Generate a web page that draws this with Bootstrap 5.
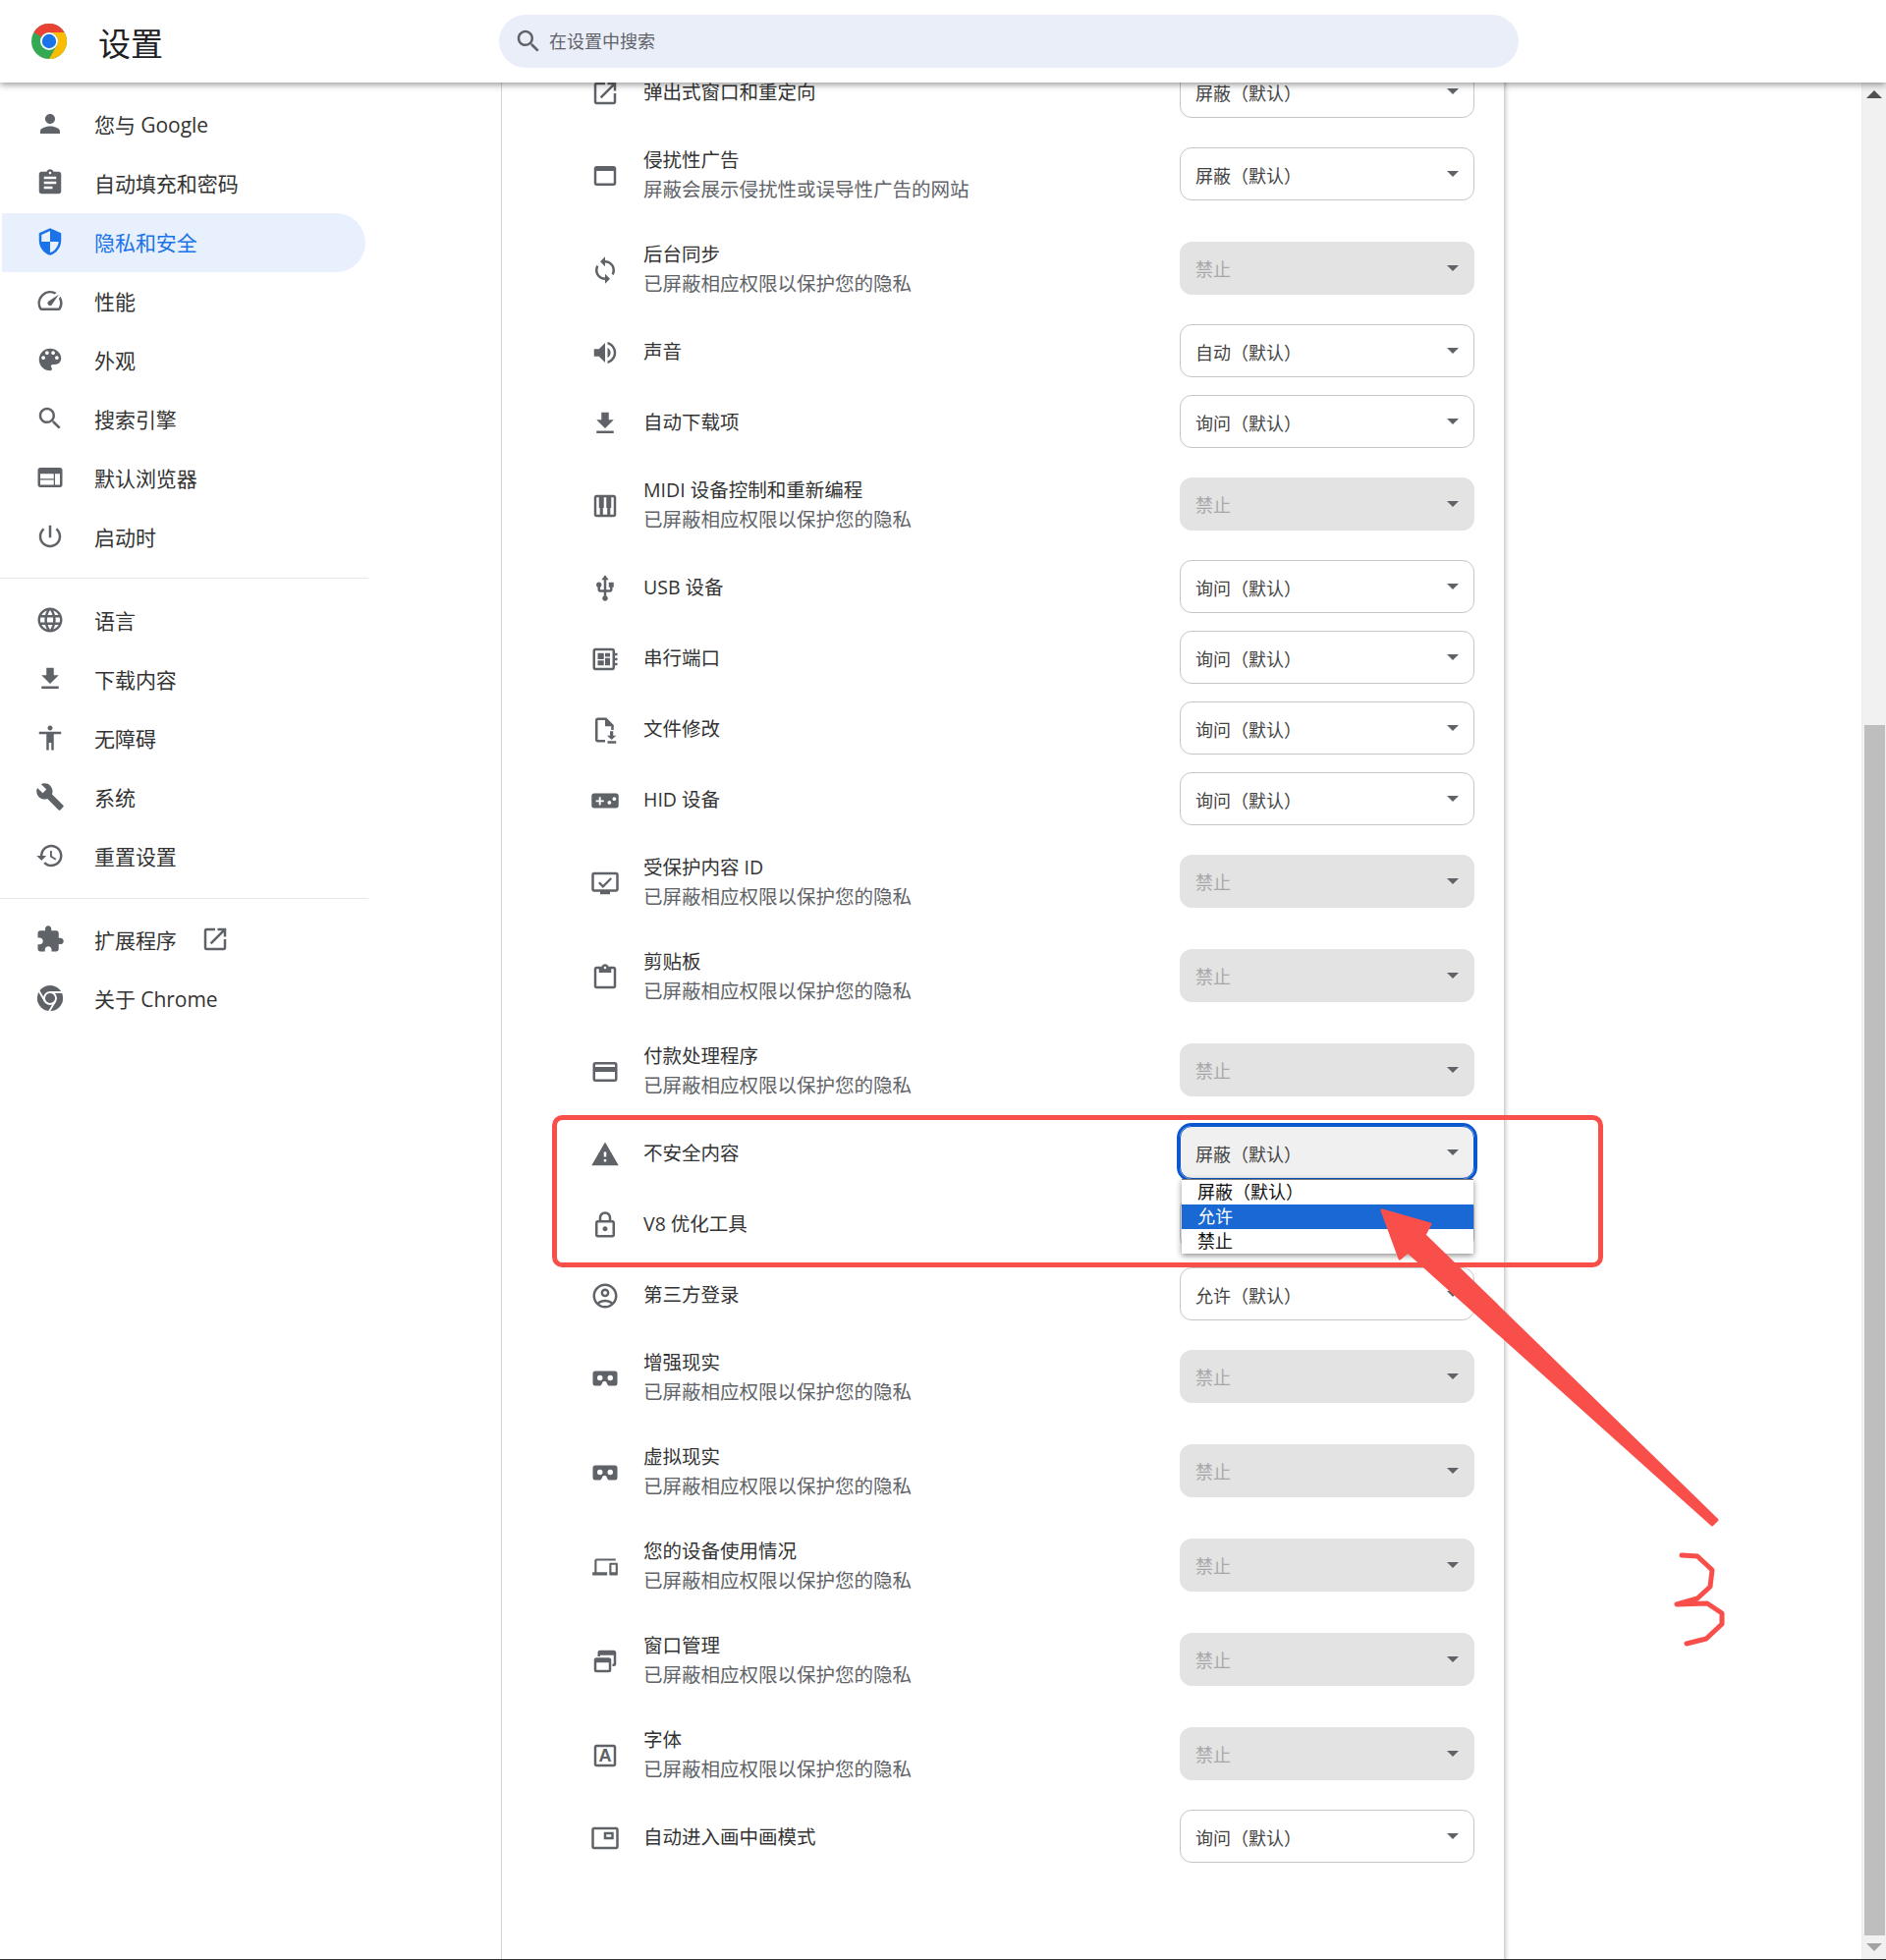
<!DOCTYPE html>
<html lang="zh-CN">
<head>
<meta charset="utf-8">
<title>设置</title>
<link href="https://cdn.jsdelivr.net/npm/bootstrap@5.3.0/dist/css/bootstrap.min.css" rel="stylesheet">
<style>
html,body{width:1920px;height:1995px;overflow:hidden;background:#fff}
body{position:relative;font-family:"Open Sans","Noto Sans CJK SC",sans-serif;color:#333}
.topbar{height:84px;background:#fff;box-shadow:0 2px 7px rgba(0,0,0,.42);position:relative;z-index:5}
.logo-box{width:36px;height:36px;margin-left:32px;margin-top:-1px}
.app-title{font-size:33px;line-height:44px;margin:5px 0 0 32px;width:408px;color:#202124;font-weight:400}
.searchbar{width:1038px;height:54px;border-radius:27px;background:#eaeef8;padding-left:15px;color:#5f6368;font-size:18px}
.searchbar svg{width:30px;height:30px;margin-right:6px;fill:#5f6368}
.page-body{height:1910px}
.side{width:510px;padding-top:13px;flex:none}
.side .nav-link{height:60px;width:372px;padding:0 0 0 36px;margin-left:0;color:#333;font-size:21px;border-radius:0 30px 30px 0;display:flex;align-items:center;letter-spacing:-.05px}
.side .nav-link svg{width:30px;height:30px;fill:#5f6368;flex:none;margin-right:30px;margin-top:-2px}
.side .nav-link span{line-height:30px}
.side .nav-link.active{background:#e8f0fe;color:#1a73e8;margin-left:2px;padding-left:34px;width:370px}
.side .nav-link.active svg{fill:#1a73e8}
.side svg.ext{width:30px;height:30px;margin:-3px 0 0 24px}
.side-sep{height:1px;background:#e8e8e8;width:375px;margin:11px 0 13px}
.side-sep.second{margin:12px 0 12px}
.content{flex:1;overflow:hidden;position:relative}
.set-card{width:1020px;margin:-27px 0 0 1px;height:2000px;border:0;border-radius:0;box-shadow:0 0 5px 1px rgba(60,64,67,.4)}
.set-row{display:flex;align-items:center;height:72px;padding:0 30px 0 90px;border:0;background:transparent}
.set-row.tall{height:96px}
.set-ico{width:30px;height:30px;fill:#5f6368;flex:none;margin-right:24px;margin-top:3px}
.set-text{flex:1;min-width:0;font-size:19.5px;line-height:30px;color:#333;padding-top:1px}
.set-sub{color:#5f6368}
.sel-wrap{width:300px;height:54px;position:relative;flex:none}
.sel-wrap::after{content:"";position:absolute;right:16px;top:24px;border-left:6px solid transparent;border-right:6px solid transparent;border-top:6px solid #5f6368;pointer-events:none}
.sel-wrap .form-select{height:54px;width:100%;background:#fff none;padding:3px 30px 0 15px;font-size:18px;line-height:26px;color:#444;border:1.5px solid #c6c6c6;border-radius:12px;font-family:inherit}
.sel-wrap .form-select:disabled{background:#e3e3e3;color:#a8a8a8;border-color:#e3e3e3;opacity:1;padding-top:1px}
.sel-wrap .form-select.is-open{outline:3px solid #0b57d0;outline-offset:0;background:#f0f0f0;border-color:#0b57d0}
.sel-pop{position:absolute;top:100%;left:2px;right:1px;min-width:0;padding:0;margin:0;border:0;border-top:1px solid #767676;border-radius:0;box-shadow:0 2px 6px rgba(0,0,0,.45);z-index:3;font-size:18px;display:block;background:#fff}
.sel-pop .dropdown-item{height:25px;line-height:25px;padding:0 0 0 16px;color:#111;font-size:18px}
.sel-pop .dropdown-item.active{background:#1a68d4;color:#fff}
.sbar{width:25px;flex:none;background:#f1f1f1;border-left:1px solid #ececec;padding:0}
.sbar-btn{height:24px;flex:none}
.sbar-up{border-left:8px solid transparent;border-right:8px solid transparent;border-bottom:8px solid #505050}
.sbar-dn{border-left:8px solid transparent;border-right:8px solid transparent;border-top:8px solid #a3a3a3}
.sbar-thumb{width:21px;height:1232px;background:#bebebe;margin:auto 0 0 1px}
.bottom-line{height:1px;background:#333}
.marks{position:absolute;left:0;top:0;width:1920px;height:1995px;z-index:10;pointer-events:none}
</style>
</head>
<body>
<svg width="0" height="0" class="d-none">
<defs>
<symbol id="i-person" viewBox="0 0 24 24"><path d="M12 12c2.21 0 4-1.79 4-4s-1.79-4-4-4-4 1.79-4 4 1.79 4 4 4zm0 2c-2.67 0-8 1.34-8 4v2h16v-2c0-2.66-5.33-4-8-4z"/></symbol>
<symbol id="i-assign" viewBox="0 0 24 24"><path d="M19 3h-4.18C14.4 1.84 13.3 1 12 1c-1.3 0-2.4.84-2.82 2H5c-1.1 0-2 .9-2 2v14c0 1.1.9 2 2 2h14c1.1 0 2-.9 2-2V5c0-1.1-.9-2-2-2zm-7 0c.55 0 1 .45 1 1s-.45 1-1 1-1-.45-1-1 .45-1 1-1zm2 14H7v-2h7v2zm3-4H7v-2h10v2zm0-4H7V7h10v2z"/></symbol>
<symbol id="i-shield" viewBox="0 0 24 24"><path d="M12 1L3 5v6c0 5.55 3.84 10.74 9 12 5.16-1.26 9-6.45 9-12V5l-9-4zm0 10.99h7c-.53 4.12-3.28 7.79-7 8.94V12H5V6.3l7-3.11v8.8z"/></symbol>
<symbol id="i-speed" viewBox="0 0 24 24"><path d="M20.38 8.57l-1.23 1.85a8 8 0 0 1-.22 7.58H5.07A8 8 0 0 1 15.58 6.85l1.85-1.23A10 10 0 0 0 3.35 19a2 2 0 0 0 1.72 1h13.85a2 2 0 0 0 1.74-1 10 10 0 0 0-.27-10.44zm-9.79 6.84a2 2 0 0 0 2.83 0l5.66-8.49-8.49 5.66a2 2 0 0 0 0 2.83z"/></symbol>
<symbol id="i-palette" viewBox="0 0 24 24"><path d="M12 3a9 9 0 0 0 0 18c.83 0 1.5-.67 1.5-1.5 0-.39-.15-.74-.39-1.01-.23-.26-.38-.61-.38-.99 0-.83.67-1.5 1.5-1.5H16c2.76 0 5-2.24 5-5 0-4.42-4.03-8-9-8zm-5.5 9c-.83 0-1.5-.67-1.5-1.5S5.67 9 6.5 9 8 9.67 8 10.5 7.33 12 6.5 12zm3-4C8.67 8 8 7.33 8 6.5S8.67 5 9.5 5s1.5.67 1.5 1.5S10.33 8 9.5 8zm5 0c-.83 0-1.5-.67-1.5-1.5S13.67 5 14.5 5s1.5.67 1.5 1.5S15.33 8 14.5 8zm3 4c-.83 0-1.5-.67-1.5-1.5S16.67 9 17.5 9s1.5.67 1.5 1.5-.67 1.5-1.5 1.5z"/></symbol>
<symbol id="i-search" viewBox="0 0 24 24"><path d="M15.5 14h-.79l-.28-.27C15.41 12.59 16 11.11 16 9.5 16 5.91 13.09 3 9.5 3S3 5.91 3 9.5 5.91 16 9.5 16c1.61 0 3.09-.59 4.23-1.57l.27.28v.79l5 4.99L20.49 19l-4.99-5zm-6 0C7.01 14 5 11.99 5 9.5S7.01 5 9.5 5 14 7.01 14 9.5 11.99 14 9.5 14z"/></symbol>
<symbol id="i-web" viewBox="0 0 24 24"><path d="M20 4H4c-1.1 0-1.99.9-1.99 2L2 18c0 1.1.9 2 2 2h16c1.1 0 2-.9 2-2V6c0-1.1-.9-2-2-2zm-5 14H4v-4h11v4zm0-5H4V9h11v4zm5 5h-4V9h4v9z"/></symbol>
<symbol id="i-power" viewBox="0 0 24 24"><path d="M13 3h-2v10h2V3zm4.83 2.17l-1.42 1.42C17.99 7.86 19 9.81 19 12c0 3.87-3.13 7-7 7s-7-3.13-7-7c0-2.19 1.01-4.14 2.58-5.42L6.17 5.17C4.23 6.82 3 9.26 3 12c0 4.97 4.03 9 9 9s9-4.03 9-9c0-2.74-1.23-5.18-3.17-6.83z"/></symbol>
<symbol id="i-globe" viewBox="0 0 24 24"><path d="M11.99 2C6.47 2 2 6.48 2 12s4.47 10 9.99 10C17.52 22 22 17.52 22 12S17.52 2 11.99 2zm6.93 6h-2.95c-.32-1.25-.78-2.45-1.38-3.56 1.84.63 3.37 1.91 4.33 3.56zM12 4.04c.83 1.2 1.48 2.53 1.91 3.96h-3.82c.43-1.43 1.08-2.76 1.91-3.96zM4.26 14C4.1 13.36 4 12.69 4 12s.1-1.36.26-2h3.38c-.08.66-.14 1.32-.14 2 0 .68.06 1.34.14 2H4.26zm.82 2h2.95c.32 1.25.78 2.45 1.38 3.56-1.84-.63-3.37-1.9-4.33-3.56zm2.95-8H5.08c.96-1.66 2.49-2.93 4.33-3.56C8.81 5.55 8.35 6.75 8.03 8zM12 19.96c-.83-1.2-1.48-2.53-1.91-3.96h3.82c-.43 1.43-1.08 2.76-1.91 3.96zM14.34 14H9.66c-.09-.66-.16-1.32-.16-2 0-.68.07-1.35.16-2h4.68c.09.65.16 1.32.16 2 0 .68-.07 1.34-.16 2zm.25 5.56c.6-1.11 1.06-2.31 1.38-3.56h2.95c-.96 1.65-2.49 2.93-4.33 3.56zM16.36 14c.08-.66.14-1.32.14-2 0-.68-.06-1.34-.14-2h3.38c.16.64.26 1.31.26 2s-.1 1.36-.26 2h-3.38z"/></symbol>
<symbol id="i-down" viewBox="0 0 24 24"><path d="M19 9h-4V3H9v6H5l7 7 7-7zM5 18v2h14v-2H5z"/></symbol>
<symbol id="i-access" viewBox="0 0 24 24"><path d="M12 2c1.1 0 2 .9 2 2s-.9 2-2 2-2-.9-2-2 .9-2 2-2zm9 7h-6v13h-2v-6h-2v6H9V9H3V7h18v2z"/></symbol>
<symbol id="i-build" viewBox="0 0 24 24"><path d="M22.7 19l-9.1-9.1c.9-2.3.4-5-1.5-6.9-2-2-5-2.4-7.4-1.3L9 6 6 9 1.6 4.7C.4 7.1.9 10.1 2.9 12.1c1.9 1.9 4.6 2.4 6.9 1.5l9.1 9.1c.4.4 1 .4 1.4 0l2.3-2.3c.5-.4.5-1.1.1-1.4z"/></symbol>
<symbol id="i-restore" viewBox="0 0 24 24"><path d="M13 3c-4.97 0-9 4.03-9 9H1l3.89 3.89.07.14L9 12H6c0-3.87 3.13-7 7-7s7 3.13 7 7-3.13 7-7 7c-1.93 0-3.68-.79-4.94-2.06l-1.42 1.42C8.27 19.99 10.51 21 13 21c4.97 0 9-4.03 9-9s-4.03-9-9-9zm-1 5v5l4.28 2.54.72-1.21-3.5-2.08V8H12z"/></symbol>
<symbol id="i-ext" viewBox="0 0 24 24"><path d="M20.5 11H19V7c0-1.1-.9-2-2-2h-4V3.5C13 2.12 11.88 1 10.5 1S8 2.12 8 3.5V5H4c-1.1 0-1.99.9-1.99 2v3.8H3.5c1.49 0 2.7 1.21 2.7 2.7s-1.21 2.7-2.7 2.7H2V20c0 1.1.9 2 2 2h3.8v-1.5c0-1.49 1.21-2.7 2.7-2.7 1.49 0 2.7 1.21 2.7 2.7V22H17c1.1 0 2-.9 2-2v-4h1.5c1.38 0 2.5-1.12 2.5-2.5S21.88 11 20.5 11z"/></symbol>
<symbol id="i-open" viewBox="0 0 24 24"><path d="M19 19H5V5h7V3H5c-1.11 0-2 .9-2 2v14c0 1.1.89 2 2 2h14c1.1 0 2-.9 2-2v-7h-2v7zM14 3v2h3.59l-9.83 9.83 1.41 1.41L19 6.41V10h2V3h-7z"/></symbol>
<symbol id="i-chromem" viewBox="0 0 24 24"><circle cx="12" cy="12" r="10.500"/><g fill="none" stroke="#fff" stroke-width="1.500"><circle cx="12" cy="12" r="4.800"/><path d="M12 7.200H22M16.200 14.400L11 23.200M7.800 14.400L2.600 5.600"/></g></symbol>
<symbol id="i-asset" viewBox="0 0 24 24"><path d="M19 4H5c-1.11 0-2 .9-2 2v12c0 1.1.89 2 2 2h14c1.1 0 2-.89 2-2V6c0-1.1-.89-2-2-2zm0 14H5V8h14v10z"/></symbol>
<symbol id="i-sync" viewBox="0 0 24 24"><path d="M12 4V1L8 5l4 4V6c3.31 0 6 2.69 6 6 0 1.01-.25 1.97-.7 2.8l1.46 1.46C19.54 15.03 20 13.57 20 12c0-4.42-3.58-8-8-8zm0 14c-3.31 0-6-2.69-6-6 0-1.01.25-1.97.7-2.8L5.24 7.74C4.46 8.97 4 10.43 4 12c0 4.42 3.58 8 8 8v3l4-4-4-4v3z"/></symbol>
<symbol id="i-vol" viewBox="0 0 24 24"><path d="M3 9v6h4l5 5V4L7 9H3zm13.5 3c0-1.77-1.02-3.29-2.5-4.03v8.05c1.48-.73 2.5-2.25 2.5-4.02zM14 3.23v2.06c2.89.86 5 3.54 5 6.71s-2.11 5.85-5 6.71v2.06c4.01-.91 7-4.49 7-8.77s-2.99-7.86-7-8.77z"/></symbol>
<symbol id="i-piano" viewBox="0 0 24 24"><path d="M19 3H5c-1.1 0-2 .9-2 2v14c0 1.1.9 2 2 2h14c1.1 0 2-.9 2-2V5c0-1.1-.9-2-2-2zm-6 10.5h.75V19h-3.5v-5.5H11V5h2v8.5zM5 5h2v8.5h.75V19H5V5zm14 14h-2.75v-5.5H17V5h2v14z"/></symbol>
<symbol id="i-usb" viewBox="0 0 24 24"><path d="M15 7v4h1v2h-3V5h2l-3-4-3 4h2v8H8v-2.07c.7-.37 1.2-1.08 1.2-1.93 0-1.21-.99-2.2-2.2-2.2-1.21 0-2.2.99-2.2 2.2 0 .85.5 1.56 1.2 1.93V13c0 1.11.89 2 2 2h3v3.05c-.71.37-1.2 1.1-1.2 1.95 0 1.22.99 2.2 2.2 2.2 1.21 0 2.2-.98 2.2-2.2 0-.85-.49-1.58-1.2-1.95V15h3c1.11 0 2-.89 2-2v-2h1V7h-4z"/></symbol>
<symbol id="i-serial" viewBox="0 0 24 24"><path d="M22 9V7h-2V5c0-1.1-.9-2-2-2H4c-1.1 0-2 .9-2 2v14c0 1.1.9 2 2 2h14c1.1 0 2-.9 2-2v-2h2v-2h-2v-2h2v-2h-2V9h2zm-4 10H4V5h14v14zM6 13h5v4H6zm6-6h4v3h-4zM6 7h5v5H6zm6 4h4v6h-4z"/></symbol>
<symbol id="i-file" viewBox="0 0 24 24"><path d="M13 2H6c-1.100 0-2 .9-2 2v16c0 1.100.9 2 2 2h6v-2H6V4h6v5h5v3h2V8l-6-6z"/><path d="M16 13h2.600v3.500H21l-3.700 3.500-3.700-3.500H16zM14 21h7v2h-7z"/></symbol>
<symbol id="i-game" viewBox="0 0 24 24"><path d="M21 6H3c-1.100 0-2 .9-2 2v8c0 1.100.9 2 2 2h18c1.100 0 2-.9 2-2V8c0-1.100-.9-2-2-2zm-10 7H8.500v2.500H7V13H4.500v-1.500H7V9h1.500v2.500H11V13zm4.500 2c-.83 0-1.500-.67-1.500-1.500s.67-1.500 1.500-1.500 1.500.67 1.500 1.500-.67 1.500-1.500 1.500zm4-3c-.83 0-1.500-.67-1.500-1.500S18.670 9 19.500 9s1.500.67 1.500 1.500-.67 1.500-1.500 1.500z"/></symbol>
<symbol id="i-monitor" viewBox="0 0 24 24"><path d="M21 3H3c-1.100 0-2 .9-2 2v12c0 1.100.9 2 2 2h5v2h8v-2h5c1.100 0 2-.9 2-2V5c0-1.100-.9-2-2-2zm0 14H3V5h18v12z"/><path d="M16.300 7.300l-6 6-2.600-2.600-1.300 1.300 3.900 3.900 7.300-7.300z"/></symbol>
<symbol id="i-clip" viewBox="0 0 24 24"><path d="M19 3h-4.180C14.400 1.840 13.300 1 12 1s-2.400.84-2.820 2H5c-1.100 0-2 .9-2 2v14c0 1.100.9 2 2 2h14c1.100 0 2-.9 2-2V5c0-1.100-.9-2-2-2zm-7 0c.55 0 1 .45 1 1s-.45 1-1 1-1-.45-1-1 .45-1 1-1zm7 16H5V5h2v3h10V5h2v14z"/></symbol>
<symbol id="i-card" viewBox="0 0 24 24"><path d="M20 4H4c-1.110 0-1.990.89-1.990 2L2 18c0 1.110.89 2 2 2h16c1.110 0 2-.89 2-2V6c0-1.110-.89-2-2-2zm0 14H4v-6h16v6zm0-10H4V6h16v2z"/></symbol>
<symbol id="i-warn" viewBox="0 0 24 24"><path d="M1 21h22L12 2 1 21zm12-3h-2v-2h2v2zm0-4h-2v-4h2v4z"/></symbol>
<symbol id="i-lock" viewBox="0 0 24 24"><path d="M18 8h-1V6c0-2.760-2.240-5-5-5S7 3.240 7 6v2H6c-1.100 0-2 .9-2 2v10c0 1.100.9 2 2 2h12c1.100 0 2-.9 2-2V10c0-1.100-.9-2-2-2zM9 6c0-1.660 1.340-3 3-3s3 1.340 3 3v2H9V6zm9 14H6V10h12v10zm-6-3c1.100 0 2-.9 2-2s-.9-2-2-2-2 .9-2 2 .9 2 2 2z"/></symbol>
<symbol id="i-acct" viewBox="0 0 24 24"><path d="M12 2C6.480 2 2 6.480 2 12s4.480 10 10 10 10-4.480 10-10S17.520 2 12 2zM7.350 18.500C8.660 17.560 10.260 17 12 17s3.340.56 4.650 1.500c-1.310.94-2.910 1.500-4.650 1.500s-3.340-.56-4.650-1.500zm10.790-1.380C16.450 15.800 14.320 15 12 15s-4.450.8-6.140 2.120C4.700 15.730 4 13.950 4 12c0-4.420 3.580-8 8-8s8 3.580 8 8c0 1.950-.7 3.730-1.860 5.120z"/><path d="M12 6c-1.930 0-3.500 1.570-3.500 3.500S10.070 13 12 13s3.500-1.570 3.500-3.500S13.930 6 12 6zm0 5c-.83 0-1.500-.67-1.500-1.500S11.170 8 12 8s1.500.67 1.500 1.500S12.830 11 12 11z"/></symbol>
<symbol id="i-vr" viewBox="0 0 24 24"><path fill-rule="evenodd" d="M4 6h16a2 2 0 0 1 2 2v8a2 2 0 0 1-2 2h-4.500c-.8 0-1.400-.5-1.700-1.200l-.5-1.300c-.3-.7-1-1.100-1.800-1.100s-1.500.4-1.800 1.100l-.5 1.300c-.3.7-.9 1.200-1.700 1.200H4a2 2 0 0 1-2-2V8a2 2 0 0 1 2-2zm3.800 3.300a2.200 2.200 0 1 0 0 4.400 2.200 2.200 0 0 0 0-4.400zm8.400 0a2.200 2.200 0 1 0 0 4.400 2.200 2.200 0 0 0 0-4.400z"/></symbol>
<symbol id="i-devices" viewBox="-2 -2 28 28"><path d="M4 6h18V4H4c-1.100 0-2 .9-2 2v11H0v3h14v-3H4V6zm19 2h-6c-.55 0-1 .45-1 1v10c0 .55.45 1 1 1h6c.55 0 1-.45 1-1V9c0-.55-.45-1-1-1zm-1 9h-4v-7h4v7z"/></symbol>
<symbol id="i-windows" viewBox="0 0 24 24"><path d="M8 3h11a2 2 0 0 1 2 2v9a2 2 0 0 1-2 2h-1v-2h1V7H8v1H6V5a2 2 0 0 1 2-2z"/><path fill-rule="evenodd" d="M5 9h10a2 2 0 0 1 2 2v8a2 2 0 0 1-2 2H5a2 2 0 0 1-2-2v-8a2 2 0 0 1 2-2zm0 4v6h10v-6z"/></symbol>
<symbol id="i-pip" viewBox="0 0 24 24"><path fill-rule="evenodd" d="M19 7h-8v6h8V7zm-2 2v2h-4V9zM21 3H3c-1.100 0-2 .9-2 2v14c0 1.100.9 1.980 2 1.980h18c1.100 0 2-.88 2-1.980V5c0-1.100-.9-2-2-2zm0 16.010H3V4.980h18v14.030z"/></symbol>
</defs>
</svg>

<header class="topbar d-flex align-items-center">
  <svg class="logo-box" viewBox="4 4 40 40"><circle cx="24" cy="24" r="20" fill="#34a853"/><path fill="#ea4335" d="M24 4A20 20 0 0 1 41.320 14H24A10 10 0 0 0 15.340 19L6.680 14A20 20 0 0 1 24 4z"/><path fill="#fbbc04" d="M41.320 14A20 20 0 0 1 24 44L32.660 29A10 10 0 0 0 24 14z"/><circle cx="24" cy="24" r="10" fill="#fff"/><circle cx="24" cy="24" r="8" fill="#1a73e8"/></svg>
  <div class="app-title">设置</div>
  <div class="searchbar d-flex align-items-center"><svg><use href="#i-search"/></svg><span>在设置中搜索</span></div>
</header>

<div class="page-body d-flex">
  <nav class="side">
    <div class="nav flex-column">
      <a class="nav-link" href="#"><svg><use href="#i-person"/></svg><span>您与 Google</span></a>
      <a class="nav-link" href="#"><svg><use href="#i-assign"/></svg><span>自动填充和密码</span></a>
      <a class="nav-link active" href="#"><svg><use href="#i-shield"/></svg><span>隐私和安全</span></a>
      <a class="nav-link" href="#"><svg><use href="#i-speed"/></svg><span>性能</span></a>
      <a class="nav-link" href="#"><svg><use href="#i-palette"/></svg><span>外观</span></a>
      <a class="nav-link" href="#"><svg><use href="#i-search"/></svg><span>搜索引擎</span></a>
      <a class="nav-link" href="#"><svg><use href="#i-web"/></svg><span>默认浏览器</span></a>
      <a class="nav-link" href="#"><svg><use href="#i-power"/></svg><span>启动时</span></a>
    </div>
    <div class="side-sep"></div>
    <div class="nav flex-column">
      <a class="nav-link" href="#"><svg><use href="#i-globe"/></svg><span>语言</span></a>
      <a class="nav-link" href="#"><svg><use href="#i-down"/></svg><span>下载内容</span></a>
      <a class="nav-link" href="#"><svg><use href="#i-access"/></svg><span>无障碍</span></a>
      <a class="nav-link" href="#"><svg><use href="#i-build"/></svg><span>系统</span></a>
      <a class="nav-link" href="#"><svg><use href="#i-restore"/></svg><span>重置设置</span></a>
    </div>
    <div class="side-sep second"></div>
    <div class="nav flex-column">
      <a class="nav-link" href="#"><svg><use href="#i-ext"/></svg><span>扩展程序</span><svg class="ext"><use href="#i-open"/></svg></a>
      <a class="nav-link" href="#"><svg><use href="#i-chromem"/></svg><span>关于 Chrome</span></a>
    </div>
  </nav>

  <main class="content">
    <div class="card set-card">
      <div class="list-group list-group-flush">
        <div class="list-group-item set-row"><svg class="set-ico"><use href="#i-open"/></svg><div class="set-text">弹出式窗口和重定向</div><div class="sel-wrap"><select class="form-select"><option>屏蔽（默认）</option></select></div></div>
        <div class="list-group-item set-row tall"><svg class="set-ico"><use href="#i-asset"/></svg><div class="set-text">侵扰性广告<div class="set-sub">屏蔽会展示侵扰性或误导性广告的网站</div></div><div class="sel-wrap"><select class="form-select"><option>屏蔽（默认）</option></select></div></div>
        <div class="list-group-item set-row tall"><svg class="set-ico"><use href="#i-sync"/></svg><div class="set-text">后台同步<div class="set-sub">已屏蔽相应权限以保护您的隐私</div></div><div class="sel-wrap"><select class="form-select" disabled><option>禁止</option></select></div></div>
        <div class="list-group-item set-row"><svg class="set-ico"><use href="#i-vol"/></svg><div class="set-text">声音</div><div class="sel-wrap"><select class="form-select"><option>自动（默认）</option></select></div></div>
        <div class="list-group-item set-row"><svg class="set-ico"><use href="#i-down"/></svg><div class="set-text">自动下载项</div><div class="sel-wrap"><select class="form-select"><option>询问（默认）</option></select></div></div>
        <div class="list-group-item set-row tall"><svg class="set-ico"><use href="#i-piano"/></svg><div class="set-text">MIDI 设备控制和重新编程<div class="set-sub">已屏蔽相应权限以保护您的隐私</div></div><div class="sel-wrap"><select class="form-select" disabled><option>禁止</option></select></div></div>
        <div class="list-group-item set-row"><svg class="set-ico"><use href="#i-usb"/></svg><div class="set-text">USB 设备</div><div class="sel-wrap"><select class="form-select"><option>询问（默认）</option></select></div></div>
        <div class="list-group-item set-row"><svg class="set-ico"><use href="#i-serial"/></svg><div class="set-text">串行端口</div><div class="sel-wrap"><select class="form-select"><option>询问（默认）</option></select></div></div>
        <div class="list-group-item set-row"><svg class="set-ico"><use href="#i-file"/></svg><div class="set-text">文件修改</div><div class="sel-wrap"><select class="form-select"><option>询问（默认）</option></select></div></div>
        <div class="list-group-item set-row"><svg class="set-ico"><use href="#i-game"/></svg><div class="set-text">HID 设备</div><div class="sel-wrap"><select class="form-select"><option>询问（默认）</option></select></div></div>
        <div class="list-group-item set-row tall"><svg class="set-ico"><use href="#i-monitor"/></svg><div class="set-text">受保护内容 ID<div class="set-sub">已屏蔽相应权限以保护您的隐私</div></div><div class="sel-wrap"><select class="form-select" disabled><option>禁止</option></select></div></div>
        <div class="list-group-item set-row tall"><svg class="set-ico"><use href="#i-clip"/></svg><div class="set-text">剪贴板<div class="set-sub">已屏蔽相应权限以保护您的隐私</div></div><div class="sel-wrap"><select class="form-select" disabled><option>禁止</option></select></div></div>
        <div class="list-group-item set-row tall"><svg class="set-ico"><use href="#i-card"/></svg><div class="set-text">付款处理程序<div class="set-sub">已屏蔽相应权限以保护您的隐私</div></div><div class="sel-wrap"><select class="form-select" disabled><option>禁止</option></select></div></div>
        <div class="list-group-item set-row"><svg class="set-ico"><use href="#i-warn"/></svg><div class="set-text">不安全内容</div><div class="sel-wrap"><select class="form-select is-open"><option>屏蔽（默认）</option></select>
          <div class="dropdown-menu show sel-pop"><a class="dropdown-item" href="#">屏蔽（默认）</a><a class="dropdown-item active" href="#">允许</a><a class="dropdown-item" href="#">禁止</a></div></div></div>
        <div class="list-group-item set-row"><svg class="set-ico"><use href="#i-lock"/></svg><div class="set-text">V8 优化工具</div><div class="sel-wrap"><select class="form-select"><option>允许（默认）</option></select></div></div>
        <div class="list-group-item set-row"><svg class="set-ico"><use href="#i-acct"/></svg><div class="set-text">第三方登录</div><div class="sel-wrap"><select class="form-select"><option>允许（默认）</option></select></div></div>
        <div class="list-group-item set-row tall"><svg class="set-ico"><use href="#i-vr"/></svg><div class="set-text">增强现实<div class="set-sub">已屏蔽相应权限以保护您的隐私</div></div><div class="sel-wrap"><select class="form-select" disabled><option>禁止</option></select></div></div>
        <div class="list-group-item set-row tall"><svg class="set-ico"><use href="#i-vr"/></svg><div class="set-text">虚拟现实<div class="set-sub">已屏蔽相应权限以保护您的隐私</div></div><div class="sel-wrap"><select class="form-select" disabled><option>禁止</option></select></div></div>
        <div class="list-group-item set-row tall"><svg class="set-ico"><use href="#i-devices"/></svg><div class="set-text">您的设备使用情况<div class="set-sub">已屏蔽相应权限以保护您的隐私</div></div><div class="sel-wrap"><select class="form-select" disabled><option>禁止</option></select></div></div>
        <div class="list-group-item set-row tall"><svg class="set-ico"><use href="#i-windows"/></svg><div class="set-text">窗口管理<div class="set-sub">已屏蔽相应权限以保护您的隐私</div></div><div class="sel-wrap"><select class="form-select" disabled><option>禁止</option></select></div></div>
        <div class="list-group-item set-row tall"><svg class="set-ico" viewBox="0 0 24 24"><path d="M19 3H5c-1.100 0-2 .9-2 2v14c0 1.100.9 2 2 2h14c1.100 0 2-.9 2-2V5c0-1.100-.9-2-2-2zm0 16H5V5h14v14z"/><text x="12" y="17" text-anchor="middle" font-size="14.500" font-weight="700" font-family="Liberation Sans, sans-serif">A</text></svg><div class="set-text">字体<div class="set-sub">已屏蔽相应权限以保护您的隐私</div></div><div class="sel-wrap"><select class="form-select" disabled><option>禁止</option></select></div></div>
        <div class="list-group-item set-row"><svg class="set-ico"><use href="#i-pip"/></svg><div class="set-text">自动进入画中画模式</div><div class="sel-wrap"><select class="form-select"><option>询问（默认）</option></select></div></div>
      </div>
    </div>
  </main>

  <aside class="sbar d-flex flex-column align-items-center">
    <div class="sbar-btn d-flex align-items-center"><div class="sbar-up"></div></div>
    <div class="sbar-thumb"></div>
    <div class="sbar-btn d-flex align-items-center"><div class="sbar-dn"></div></div>
  </aside>
</div>
<div class="bottom-line"></div>

<svg class="marks" viewBox="0 0 1920 1995">
  <rect x="564.500" y="1137.500" width="1065" height="150" rx="8" fill="none" stroke="#f94f4b" stroke-width="5"/>
  <polygon points="1407,1232 1456,1246 1450,1257 1748,1547 1743,1552 1433,1274 1425,1281" fill="#f94f4b" stroke="#f94f4b" stroke-width="3" stroke-linejoin="round"/>
  <polyline points="1712,1583 1728,1584 1743,1598 1741,1615 1728,1627 1707,1633 1738,1632 1753,1642 1753,1653 1737,1668 1717,1673" fill="none" stroke="#f94f4b" stroke-width="5" stroke-linecap="round" stroke-linejoin="round"/>
</svg>
<script src="https://cdn.jsdelivr.net/npm/bootstrap@5.3.0/dist/js/bootstrap.bundle.min.js"></script>
</body>
</html>
